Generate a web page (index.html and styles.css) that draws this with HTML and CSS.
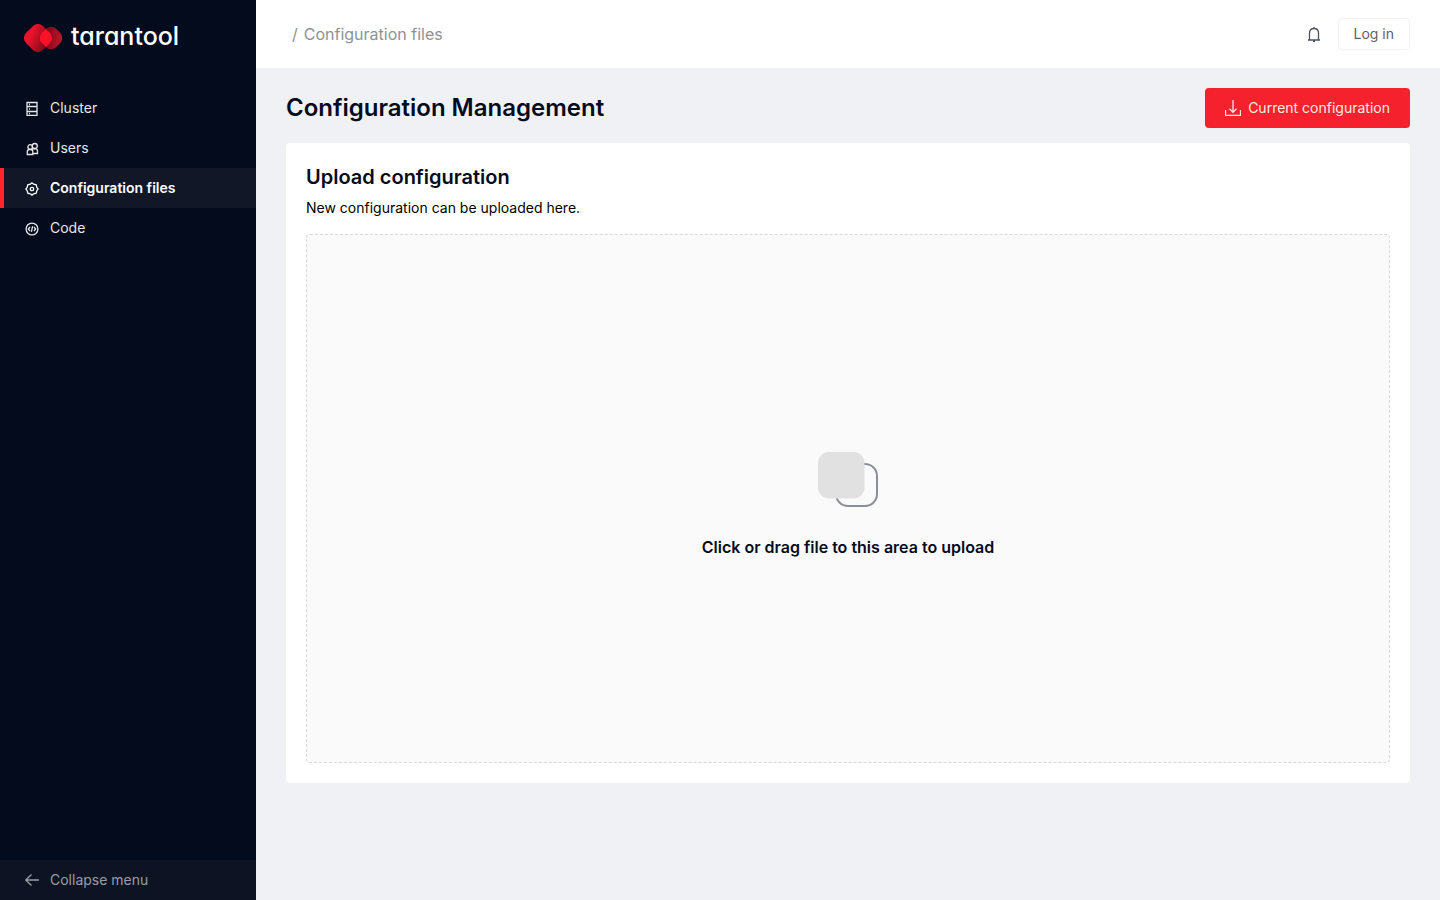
FILE: index.html
```html
<!DOCTYPE html>
<html lang="en">
<head>
<meta charset="utf-8">
<title>Configuration files</title>
<link rel="stylesheet" href="styles.css">
</head>
<body>
<div class="app">
  <aside class="sidebar">
    <a class="logo" href="#">
      <svg width="38" height="28" viewBox="0 0 38 28" aria-hidden="true">
        <defs>
          <linearGradient id="left" x1="0.1" y1="0.6" x2="0.9" y2="0.3"><stop offset="0.1" stop-color="#e8142a"/><stop offset="0.95" stop-color="#850a1b"/></linearGradient>
          <linearGradient id="right" x1="1" y1="0.2" x2="0.2" y2="0.8"><stop offset="0" stop-color="#c8142a"/><stop offset="0.8" stop-color="#800a1a"/></linearGradient>
          <clipPath id="clip"><rect x="2" y="2" width="24" height="24" rx="7" transform="rotate(45 14 14)"/></clipPath>
        </defs>
        <rect x="2" y="2" width="24" height="24" rx="7" transform="rotate(45 14 14)" fill="url(#left)"/>
        <rect x="17" y="4" width="20" height="20" rx="7" transform="rotate(45 27 14)" fill="url(#right)"/>
        <g clip-path="url(#clip)"><rect x="17" y="4" width="20" height="20" rx="7" transform="rotate(45 27 14)" fill="#ff1029"/></g>
      </svg>
      <span class="wordmark">tarantool</span>
    </a>
    <nav class="menu">
      <a class="item" href="#">
        <svg class="icon" viewBox="0 0 16 16"><path d="M3 2.500h10v13H3zM3 6.500h10M3 11.500h10M5 4.500h1M5 9h1M5 13.500h1"/></svg>
        Cluster
      </a>
      <a class="item" href="#">
        <svg class="icon" viewBox="0 0 16 16"><circle cx="6.200" cy="7" r="2.300"/><circle cx="10.800" cy="6" r="2.500"/><path d="M3.300 14.500V11.800Q3.300 9.500 5.300 9.500H6.800Q8.800 9.500 8.800 11.800V14.500ZM8.800 13.500H13.500V10.800Q13.500 8.800 11.500 8.800H9.500Q8.300 8.800 8 9.800"/></svg>
        Users
      </a>
      <a class="item active" href="#" aria-current="page">
        <svg class="icon" viewBox="0 0 16 16"><path d="M8 2.900L9.700 4.200L12.200 4.800L12.800 7.300L14.100 9L12.800 10.700L12.200 13.200L9.700 13.800L8 15.100L6.300 13.800L3.800 13.200L3.200 10.700L1.900 9L3.200 7.300L3.800 4.800L6.300 4.200Z"/><circle cx="8" cy="9" r="1.700"/></svg>
        Configuration files
      </a>
      <a class="item" href="#">
        <svg class="icon" viewBox="0 0 16 16"><circle cx="8" cy="9" r="5.900"/><path d="M6 7L4.300 9L6 11M10 7L11.700 9L10 11M8.600 6.200L7.400 11.800"/></svg>
        Code
      </a>
    </nav>
    <button class="collapse" type="button">
      <svg class="icon" viewBox="0 0 16 16"><path d="M15 8H2M7.500 2.500L1.700 8L7.500 13.500"/></svg>
      Collapse menu
    </button>
  </aside>
  <div class="page">
    <header class="topbar">
      <nav class="crumbs" aria-label="Breadcrumb"><span>/</span><span>Configuration files</span></nav>
      <div class="actions">
        <button class="bell" type="button" aria-label="Notifications">
          <svg class="icon" viewBox="0 0 16 16"><path d="M2 14H14M3.500 14V7Q3.500 2.500 8 2.500Q12.500 2.500 12.500 7V14M8 2.500V1M7 15.500H9"/></svg>
        </button>
        <button class="login" type="button">Log in</button>
      </div>
    </header>
    <main class="content">
      <div class="heading">
        <h1>Configuration Management</h1>
        <button class="primary" type="button">
          <svg class="icon" viewBox="0 0 16 16"><path d="M8 0V12M4.500 8.800L8 12.300L11.500 8.800M.5 10V15.400H15.500V10"/></svg>
          Current configuration
        </button>
      </div>
      <section class="card">
        <h2>Upload configuration</h2>
        <p>New configuration can be uploaded here.</p>
        <button class="dropzone" type="button">
          <svg width="60" height="56" viewBox="0 0 60 56" aria-hidden="true"><rect x="18" y="12" width="41" height="42" rx="12" fill="none" stroke="#8d8f98" stroke-width="2"/><rect width="46.500" height="46.500" rx="11" fill="#e1e1e1"/></svg>
          <span>Click or drag file to this area to upload</span>
        </button>
      </section>
    </main>
  </div>
</div>
</body>
</html>
```
FILE: styles.css
```css
* { box-sizing: border-box; }
body {
  margin: 0;
  font: 14px/22px Inter, sans-serif;
  color: #000;
  background: #f0f1f5;
}
button { font: inherit; cursor: pointer; }
a { text-decoration: none; }
h1, h2, p { margin: 0; }
.app { display: flex; min-height: 100vh; }
.icon {
  width: 16px;
  height: 16px;
  flex: none;
  fill: none;
  stroke: currentColor;
  stroke-width: 1.3;
}
.sidebar {
  display: flex;
  flex-direction: column;
  flex: 0 0 256px;
  background: #040b1d;
}
.logo {
  display: flex;
  align-items: flex-start;
  gap: 9px;
  padding: 24px 24px 36px;
  color: #fff;
}
.wordmark {
  font-size: 25px;
  line-height: 24px;
  font-weight: 500;
  font-feature-settings: "cv11";
}
.menu { flex: 1; }
.item {
  display: flex;
  align-items: center;
  gap: 10px;
  height: 40px;
  padding: 0 20px;
  border-left: 4px solid transparent;
  color: #e6e7e8;
}
.active {
  border-color: #ff272c;
  background: #121728;
  color: #fff;
  font-weight: 600;
}
.collapse {
  display: flex;
  align-items: center;
  gap: 10px;
  height: 40px;
  padding: 0 24px;
  border: 0;
  background: #0e1324;
  color: #9b9da4;
}
.page { flex: 1; min-width: 0; }
.topbar {
  display: flex;
  justify-content: space-between;
  align-items: center;
  height: 68px;
  padding: 0 30px 0 36px;
  background: #fff;
}
.crumbs {
  display: flex;
  gap: 6px;
  font-size: 16px;
  color: #8f9196;
}
.actions { display: flex; align-items: center; gap: 16px; }
.bell {
  display: flex;
  padding: 0;
  border: 0;
  background: none;
  color: #4c5161;
}
.login {
  height: 32px;
  padding: 0 15px;
  border: 1px solid #f0f1f5;
  border-radius: 4px;
  background: #fff;
  color: #5e616b;
  line-height: 20px;
}
.content { padding: 20px 30px; }
.heading {
  display: flex;
  justify-content: space-between;
  align-items: center;
  margin-bottom: 15px;
}
h1 { font-size: 24px; line-height: 32px; font-weight: 600; color: #040b1d; }
.primary {
  display: flex;
  align-items: center;
  gap: 7px;
  height: 40px;
  padding: 0 20px;
  border: 0;
  border-radius: 4px;
  background: #f5222d;
  color: #ffe9ea;
}
.card {
  display: flex;
  flex-direction: column;
  padding: 20px;
  border-radius: 4px;
  background: #fff;
}
h2 { font-size: 20px; line-height: 28px; font-weight: 600; color: #040b1d; }
.card p { margin: 6px 0 15px; }
.dropzone {
  display: flex;
  flex-direction: column;
  align-items: center;
  justify-content: center;
  gap: 28px;
  min-height: 529px;
  padding: 36px 24px 24px;
  border: 1px dashed #d9d9d9;
  border-radius: 4px;
  background: #fafafa;
  color: #040b1d;
  font-size: 16px;
  font-weight: 600;
}
```
